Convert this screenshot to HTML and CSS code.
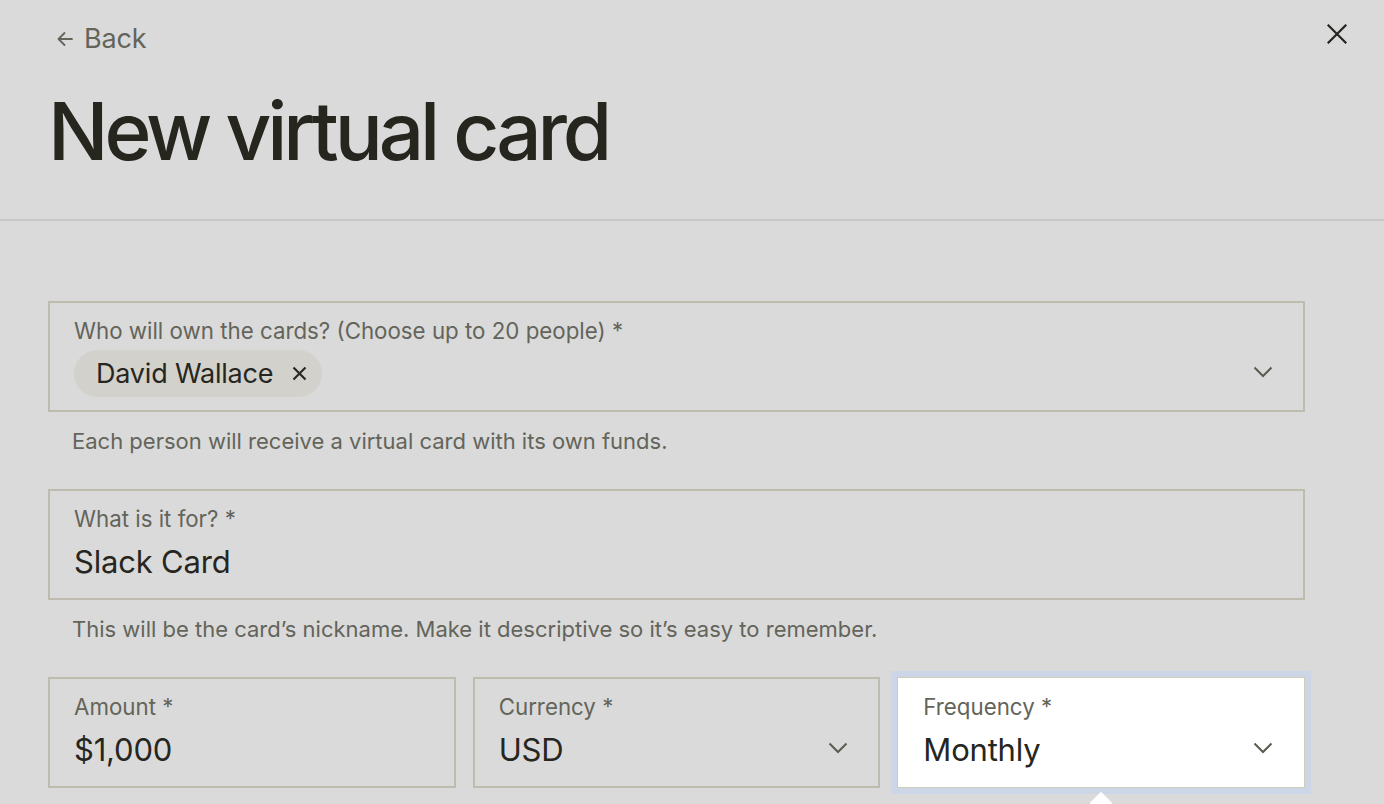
FILE: index.html
```html
<!DOCTYPE html>
<html lang="en">
<head>
<meta charset="utf-8">
<title>New virtual card</title>
<link rel="stylesheet" href="styles.css">
</head>
<body>
<div class="page">
  <header class="header">
    <div class="topbar">
      <a class="back" href="#">
        <svg class="back-icon" width="20" height="20" viewBox="0 0 20 20" fill="none" stroke="currentColor" stroke-width="1.8" stroke-linecap="round" stroke-linejoin="round"><path d="M17 10H3.5M9.5 4L3.5 10l6 6"/></svg>
        <span>Back</span>
      </a>
      <button class="close" aria-label="Close">
        <svg width="20" height="20" viewBox="0 0 20 20" fill="none" stroke="currentColor" stroke-width="2.2" stroke-linecap="square"><path d="M1.5 1.5l17 17M18.5 1.5l-17 17"/></svg>
      </button>
    </div>
    <h1 class="title">New virtual card</h1>
  </header>

  <main class="form">
    <div class="group">
      <div class="field">
        <div class="field-body">
          <div class="label">Who will own the cards? (Choose up to 20 people) *</div>
          <div class="chips">
            <span class="chip">David Wallace
              <svg class="chip-x" width="15" height="15" viewBox="0 0 15 15" fill="none" stroke="currentColor" stroke-width="2.2"><path d="M1.5 1.5l12 12M13.5 1.5l-12 12"/></svg>
            </span>
          </div>
        </div>
        <svg class="chev" width="20" height="12" viewBox="0 0 20 12" fill="none" stroke="currentColor" stroke-width="2"><path d="M1.5 1.5L10 10l8.5-8.5"/></svg>
      </div>
      <p class="help">Each person will receive a virtual card with its own funds.</p>
    </div>

    <div class="group">
      <div class="field">
        <div class="field-body">
          <div class="label">What is it for? *</div>
          <div class="value">Slack Card</div>
        </div>
      </div>
      <p class="help">This will be the card’s nickname. Make it descriptive so it’s easy to remember.</p>
    </div>

    <div class="row">
      <div class="field">
        <div class="field-body">
          <div class="label">Amount *</div>
          <div class="value">$1,000</div>
        </div>
      </div>
      <div class="field">
        <div class="field-body">
          <div class="label">Currency *</div>
          <div class="value">USD</div>
        </div>
        <svg class="chev" width="20" height="12" viewBox="0 0 20 12" fill="none" stroke="currentColor" stroke-width="2"><path d="M1.5 1.5L10 10l8.5-8.5"/></svg>
      </div>
      <div class="field focused">
        <div class="field-body">
          <div class="label">Frequency *</div>
          <div class="value">Monthly</div>
        </div>
        <svg class="chev" width="20" height="12" viewBox="0 0 20 12" fill="none" stroke="currentColor" stroke-width="2"><path d="M1.5 1.5L10 10l8.5-8.5"/></svg>
        <span class="pointer"></span>
      </div>
    </div>
  </main>
</div>
</body>
</html>
```

FILE: styles.css
```css
* { box-sizing: border-box; }
html, body { margin: 0; padding: 0; }
body {
  background: #dadada;
  font-family: Inter, "Noto Sans", "Liberation Sans", sans-serif;
  color: #2a2a24;
  width: 1384px;
  height: 804px;
  overflow: hidden;
}
.page { display: flex; flex-direction: column; }

.header {
  border-bottom: 2px solid #c6c6c6;
  padding: 18px 79px 0 48px;
  height: 221px;
}
.topbar {
  display: flex;
  justify-content: space-between;
  align-items: flex-start;
  height: 70px;
}
.back {
  display: flex;
  align-items: center;
  gap: 9px;
  margin-left: 7px;
  color: #63645a;
  text-decoration: none;
  font-size: 27px;
  line-height: 42px;
  letter-spacing: -0.2px;
}
.back-icon { width: 20px; height: 20px; }
.close {
  border: 0;
  background: none;
  padding: 0;
  margin: 6px -42px 0 0;
  color: #232320;
  width: 20px;
  height: 20px;
  display: flex;
}
.title {
  margin: 0;
  font-size: 80px;
  font-weight: 500;
  letter-spacing: -4.1px;
  line-height: 86px;
  color: #26261f;
}

.form {
  padding: 80px 79px 0 48px;
  display: flex;
  flex-direction: column;
}
.group { display: flex; flex-direction: column; }
.help {
  margin: 15px 0 34px 24px;
  font-size: 22px;
  line-height: 28px;
  color: #63645a;
}

.field {
  position: relative;
  display: flex;
  align-items: flex-start;
  height: 111px;
  border: 2px solid #bdbcae;
  padding: 15px 30px 0 24px;
}
.field-body {
  flex: 1;
  display: flex;
  flex-direction: column;
  min-width: 0;
}
.label {
  font-size: 22.3px;
  line-height: 26px;
  color: #63645a;
  white-space: nowrap;
}
.value {
  margin-top: 12px;
  font-size: 31px;
  line-height: 36px;
  color: #26261f;
  letter-spacing: -0.2px;
}
.chips { display: flex; margin-top: 6px; }
.chip {
  display: inline-flex;
  align-items: center;
  gap: 19px;
  height: 47px;
  padding: 0 15px 0 22px;
  border-radius: 24px;
  background: #d2d1cc;
  font-size: 27px;
  color: #26261f;
  letter-spacing: -0.2px;
}
.chip-x { color: #2a2a24; }
.chev { color: #5b5c52; flex: none; margin-top: 48px; }

.row {
  display: grid;
  grid-template-columns: repeat(3, 1fr);
  gap: 17px;
}
.focused {
  background: #ffffff;
  border: 1px solid #cfcdb8;
  box-shadow: 0 0 0 6px #ccd6e6;
  padding: 16px 31px 0 25px;
}
.pointer {
  position: absolute;
  left: 50%;
  bottom: -24px;
  width: 16px;
  height: 16px;
  margin-left: -8px;
  background: #ffffff;
  transform: rotate(45deg);
}
```
